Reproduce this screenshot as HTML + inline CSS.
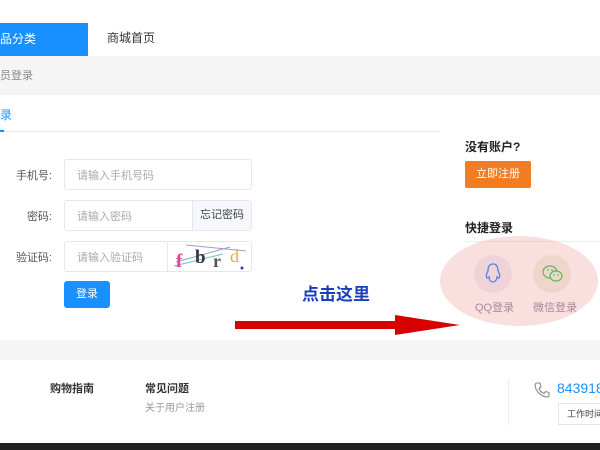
<!DOCTYPE html>
<html><head><meta charset="utf-8"><style>
*{margin:0;padding:0;box-sizing:border-box}
body{width:600px;height:450px;overflow:hidden;background:#f5f5f5;font-family:"Liberation Sans","Noto Sans CJK SC",sans-serif;position:relative;font-size:11px;color:#333}
.a{position:absolute}
.inp{position:absolute;left:64px;width:188px;height:31px;border:1px solid #e4e7ed;border-radius:3px;background:#fff;color:#aaa;font-size:11px;display:flex;align-items:center;padding-left:12px}
.lbl{position:absolute;width:52px;text-align:right;color:#555;font-size:11px}
</style></head><body>
<div class="a" style="left:0;top:0;width:600px;height:56px;background:#fff"></div>
<div class="a" style="left:0;top:23px;width:88px;height:33px;background:#1890ff;color:#fff;font-size:12px;line-height:33px">品分类</div>
<div class="a" style="left:107px;top:29px;font-size:12px;color:#333">商城首页</div>
<div class="a" style="left:0;top:67px;color:#888;font-size:11px">员登录</div>
<div class="a" style="left:0;top:95px;width:600px;height:245px;background:#fff"></div>
<div class="a" style="left:0;top:106px;color:#1890ff;font-size:12px">录</div>
<div class="a" style="left:0;top:131px;width:440px;height:1px;background:#e8e8e8"></div>
<div class="a" style="left:0;top:130px;width:4px;height:2px;background:#1890ff"></div>
<div class="lbl" style="left:0;top:167px">手机号:</div>
<div class="inp" style="top:159px">请输入手机号码</div>
<div class="lbl" style="left:0;top:208px">密码:</div>
<div class="inp" style="top:200px">请输入密码</div>
<div class="a" style="left:192px;top:201px;width:59px;height:29px;background:#f5f7fa;border-left:1px solid #e4e7ed;color:#444;font-size:11px;line-height:29px;text-align:center">忘记密码</div>
<div class="lbl" style="left:0;top:249px">验证码:</div>
<div class="inp" style="top:241px">请输入验证码</div>
<div class="a" style="left:167px;top:242px;width:84px;height:29px;border-left:1px solid #e4e7ed;background:#fff">
<svg width="84" height="29"><line x1="8" y1="20" x2="62" y2="5" stroke="#8ab" stroke-width="1"/><line x1="18" y1="3" x2="78" y2="9" stroke="#a9c" stroke-width="1"/><line x1="6" y1="24" x2="55" y2="12" stroke="#7bc"/><text x="8" y="25" fill="#e3439f" font-size="19" font-family="Liberation Serif" font-weight="bold">f</text><text x="27" y="21" fill="#334" font-size="19" font-family="Liberation Serif" font-weight="bold">b</text><text x="45" y="25" fill="#555" font-size="18" font-family="Liberation Serif" font-weight="bold">r</text><text x="62" y="20" fill="#dcb23c" font-size="18" font-family="Liberation Serif">d</text><circle cx="74" cy="26" r="1.5" fill="#33f"/></svg></div>
<div class="a" style="left:64px;top:281px;width:46px;height:27px;background:#1890ff;border-radius:3px;color:#fff;font-size:11px;line-height:27px;text-align:center">登录</div>
<div class="a" style="left:302px;top:280px;color:#1a3fb8;font-size:17px;font-weight:bold">点击这里</div>
<svg class="a" style="left:230px;top:310px" width="240" height="30"><rect x="5" y="11" width="165" height="8" fill="#d90000"/><polygon points="165,5 230,15 165,25" fill="#d90000"/></svg>
<div class="a" style="left:465px;top:138px;font-size:12px;font-weight:bold;color:#222">没有账户?</div>
<div class="a" style="left:465px;top:161px;width:66px;height:27px;background:#f47c20;border-radius:2px;color:#fff;font-size:11px;line-height:27px;text-align:center">立即注册</div>
<div class="a" style="left:465px;top:219px;font-size:12px;font-weight:bold;color:#222">快捷登录</div>
<div class="a" style="left:465px;top:241px;width:135px;height:1px;background:#eee"></div>
<div class="a" style="left:474px;top:255px;width:38px;height:38px;border-radius:50%;background:#efeef6"></div>
<div class="a" style="left:533px;top:255px;width:38px;height:38px;border-radius:50%;background:#eef3e6"></div>
<div class="a" style="left:440px;top:236px;width:158px;height:90px;border-radius:50%;background:rgba(240,150,150,0.3)"></div>
<svg class="a" style="left:483px;top:262px" width="20" height="24"><path d="M10 2C5.5 2 5 6 5 9 3 12 3 15 4 16 5 16 6 15 6 15 6 18 8 20 10 20 12 20 14 18 14 15 14 15 15 16 16 16 17 15 17 12 15 9 15 6 14.5 2 10 2Z" fill="none" stroke="#4a86e8" stroke-width="1.3"/></svg>
<svg class="a" style="left:541px;top:264px" width="24" height="20"><ellipse cx="9" cy="8" rx="7" ry="6" fill="none" stroke="#5cb85c" stroke-width="1.2"/><ellipse cx="15" cy="12" rx="6" ry="5" fill="#e6dccb" stroke="#5cb85c" stroke-width="1.2"/><circle cx="7" cy="6" r="0.9" fill="#5cb85c"/><circle cx="11" cy="6" r="0.9" fill="#5cb85c"/><circle cx="13" cy="11" r="0.8" fill="#5cb85c"/><circle cx="17" cy="11" r="0.8" fill="#5cb85c"/></svg>
<div class="a" style="left:475px;top:299px;color:#a89;font-size:11px">QQ登录</div>
<div class="a" style="left:533px;top:299px;color:#a89;font-size:11px">微信登录</div>
<div class="a" style="left:0;top:360px;width:600px;height:83px;background:#fff"></div>
<div class="a" style="left:50px;top:380px;font-size:11px;font-weight:bold;color:#333">购物指南</div>
<div class="a" style="left:145px;top:380px;font-size:11px;font-weight:bold;color:#333">常见问题</div>
<div class="a" style="left:145px;top:399px;font-size:10px;color:#999">关于用户注册</div>
<div class="a" style="left:508px;top:379px;width:1px;height:46px;background:#eee"></div>
<svg class="a" style="left:533px;top:381px" width="18" height="18"><path d="M4 2L7 2 8 6 6 7.5C7 10 8.5 11.5 11 12.5L12.5 10.5 16 11.5 16 14.5C16 15.5 15 16 14 16 8 15.5 2.5 10 2 4 2 3 3 2 4 2Z" fill="none" stroke="#888" stroke-width="1.1"/></svg>
<div class="a" style="left:557px;top:380px;font-size:14px;color:#1890ff">843918</div>
<div class="a" style="left:558px;top:403px;width:50px;height:22px;border:1px solid #e5e5e5;font-size:9px;line-height:20px;padding-left:8px;color:#444;background:#fff">工作时间</div>
<div class="a" style="left:0;top:443px;width:600px;height:7px;background:#222"></div>
</body></html>
